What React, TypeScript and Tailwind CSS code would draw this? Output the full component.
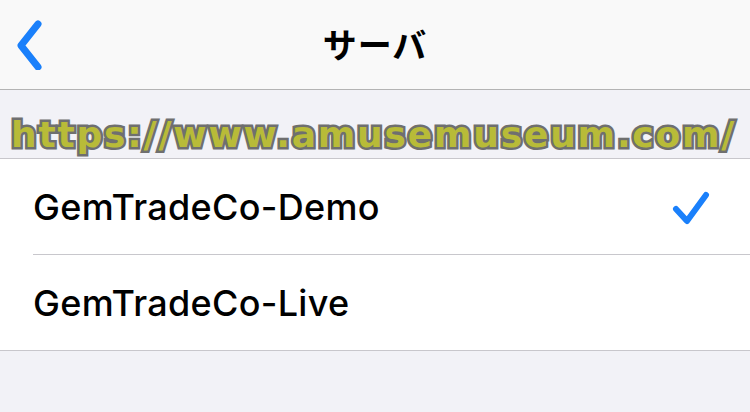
import React from "react";

const Chevron = () => (
  <svg width="34" height="50" viewBox="0 0 34 50" className="block">
    <path d="M24 4 L7 25.5 L24 47" fill="none" stroke="#1a80fb" strokeWidth="7" strokeLinecap="round" strokeLinejoin="round" />
  </svg>
);

const Check = () => (
  <svg width="44" height="40" viewBox="0 0 44 40" className="block">
    <path d="M6 22 L17 34 L36 8" fill="none" stroke="#1a80fb" strokeWidth="6" strokeLinecap="round" strokeLinejoin="round" />
  </svg>
);

export default function App() {
  return (
    <div className="relative w-[750px] h-[412px] overflow-hidden bg-[#f2f2f7]" style={{ fontFamily: "Inter, 'Liberation Sans', sans-serif" }}>
      <div className="h-[90px] bg-[#f9f9f9] border-b border-[#b4b4b4] grid grid-cols-[1fr_auto_1fr] items-center">
        <div className="pl-[14px] pt-[1px]">
          <Chevron />
        </div>
        <div className="text-[34px] font-bold text-black tracking-[1px] pb-[2px]" style={{ fontFamily: "'Noto Sans CJK JP', sans-serif" }}>
          サーバ
        </div>
        <div />
      </div>
      <div className="h-[68px]" />
      <div className="bg-white border-t border-b border-[#c8c7cc]">
        <div className="h-[95px] flex items-center justify-between pl-[33px] pr-[36px]">
          <span className="text-[36px] font-medium text-black tracking-[0.3px]">GemTradeCo-Demo</span>
          <Check />
        </div>
        <div className="ml-[33px] h-px bg-[#c8c7cc]" />
        <div className="h-[95px] flex items-center pl-[33px]">
          <span className="text-[36px] font-medium text-black tracking-[0.3px]">GemTradeCo-Live</span>
        </div>
      </div>
      <div
        className="absolute left-[11px] top-[117px] text-[36px] font-bold leading-none whitespace-nowrap text-[#b8bb38] tracking-[1.8px]"
        style={{
          fontFamily: "'DejaVu Sans', sans-serif",
          WebkitTextStroke: "5px #6f6f6f",
          paintOrder: "stroke fill",
        }}
      >
        https://www.amusemuseum.com/
      </div>
    </div>
  );
}
